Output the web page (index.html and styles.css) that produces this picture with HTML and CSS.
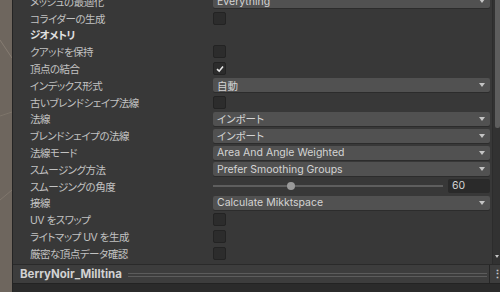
FILE: index.html
```html
<!DOCTYPE html>
<html lang="ja">
<head>
    <meta charset="UTF-8">
    <meta name="viewport" content="width=device-width, initial-scale=1.0">
    <title>Model Import Settings</title>
    <link rel="stylesheet" href="styles.css">
</head>
<body>
    <div class="scene">
        <svg width="12" height="292" viewBox="0 0 12 292">
            <line x1="0" y1="40" x2="12" y2="58" stroke="#867c72" stroke-width="1"/>
            <line x1="0" y1="116" x2="12" y2="112" stroke="#7d746a" stroke-width="1"/>
            <line x1="0" y1="200" x2="12" y2="190" stroke="#80776d" stroke-width="1"/>
        </svg>
    </div>
    <div class="inspector">
        <div class="content">
            <div class="rows">
                <div class="row">
                    <span class="label">メッシュの最適化</span>
                    <div class="dropdown">Everything<i class="arrow"></i></div>
                </div>
                <div class="row">
                    <span class="label">コライダーの生成</span>
                    <span class="check"></span>
                </div>
                <div class="row">
                    <span class="label header">ジオメトリ</span>
                </div>
                <div class="row">
                    <span class="label">クアッドを保持</span>
                    <span class="check"></span>
                </div>
                <div class="row">
                    <span class="label">頂点の結合</span>
                    <span class="check on">
                        <svg width="10" height="10" viewBox="0 0 10 10"><polyline points="2,5.2 4.2,7.2 8,2.6" fill="none" stroke="#e8e8e8" stroke-width="1.6"/></svg>
                    </span>
                </div>
                <div class="row">
                    <span class="label">インデックス形式</span>
                    <div class="dropdown">自動<i class="arrow"></i></div>
                </div>
                <div class="row">
                    <span class="label">古いブレンドシェイプ法線</span>
                    <span class="check"></span>
                </div>
                <div class="row">
                    <span class="label">法線</span>
                    <div class="dropdown">インポート<i class="arrow"></i></div>
                </div>
                <div class="row">
                    <span class="label">ブレンドシェイプの法線</span>
                    <div class="dropdown">インポート<i class="arrow"></i></div>
                </div>
                <div class="row">
                    <span class="label">法線モード</span>
                    <div class="dropdown">Area And Angle Weighted<i class="arrow"></i></div>
                </div>
                <div class="row">
                    <span class="label">スムージング方法</span>
                    <div class="dropdown">Prefer Smoothing Groups<i class="arrow"></i></div>
                </div>
                <div class="row">
                    <span class="label">スムージングの角度</span>
                    <div class="slider">
                        <div class="track"><span class="knob" style="left: 34%"></span></div>
                        <div class="number">60</div>
                    </div>
                </div>
                <div class="row">
                    <span class="label">接線</span>
                    <div class="dropdown">Calculate Mikktspace<i class="arrow"></i></div>
                </div>
                <div class="row">
                    <span class="label">UV をスワップ</span>
                    <span class="check"></span>
                </div>
                <div class="row">
                    <span class="label">ライトマップ UV を生成</span>
                    <span class="check"></span>
                </div>
                <div class="row">
                    <span class="label">厳密な頂点データ確認</span>
                    <span class="check"></span>
                </div>
            </div>
            <div class="scrollbar">
                <div class="thumb"></div>
                <i class="down"></i>
            </div>
        </div>
        <div class="footer">
            <span class="asset-name">BerryNoir_Milltina</span>
            <span class="grip"></span>
            <span class="menu">⋮</span>
        </div>
        <div class="bottom"></div>
    </div>
</body>
</html>
```

FILE: styles.css
```css
body {
    margin: 0;
    width: 500px;
    height: 292px;
    overflow: hidden;
    display: flex;
    background-color: #383838;
    font-family: Inter, "Noto Sans CJK JP", sans-serif;
    font-feature-settings: "palt";
    color: #c2c2c2;
}
.scene {
    width: 12px;
    flex: none;
    background-color: #6e665e;
    border-right: 1px solid #242424;
}
.scene svg {
    display: block;
}
.inspector {
    flex: 1;
    display: flex;
    flex-direction: column;
    min-width: 0;
}
.content {
    flex: 1;
    display: flex;
    overflow: hidden;
}
.rows {
    flex: 1;
    margin-top: -7px;
    padding-left: 17px;
    padding-right: 2px;
}
.row {
    height: 16.8px;
    display: flex;
    align-items: center;
}
.label {
    width: 183px;
    flex: none;
    font-size: 10.5px;
    letter-spacing: -0.5px;
    white-space: nowrap;
    overflow: hidden;
}
.label.header {
    font-weight: bold;
    color: #e0e0e0;
}
.dropdown {
    flex: 1;
    height: 14px;
    box-sizing: border-box;
    background-color: #515151;
    border-radius: 2px;
    box-shadow: 0 1px 0 #2c2c2c;
    display: flex;
    align-items: center;
    padding-left: 4px;
    padding-right: 5px;
    font-size: 10.5px;
    color: #d4d4d4;
    white-space: nowrap;
}
.arrow {
    margin-left: auto;
    width: 0;
    height: 0;
    border-left: 3.5px solid transparent;
    border-right: 3.5px solid transparent;
    border-top: 4px solid #c4c4c4;
}
.check {
    width: 11px;
    height: 11px;
    background-color: #2c2c2c;
    border: 1px solid #232323;
    border-radius: 2px;
    display: flex;
    align-items: center;
    justify-content: center;
}
.check svg {
    display: block;
}
.slider {
    flex: 1;
    display: flex;
    align-items: center;
}
.track {
    flex: 1;
    height: 2px;
    background-color: #5e5e5e;
    position: relative;
    margin-right: 5px;
}
.knob {
    position: absolute;
    top: -3px;
    width: 8px;
    height: 8px;
    margin-left: -4px;
    border-radius: 50%;
    background-color: #999999;
}
.number {
    width: 42px;
    height: 14px;
    box-sizing: border-box;
    background-color: #2a2a2a;
    border-radius: 2px;
    padding-left: 4px;
    font-size: 10.5px;
    line-height: 14px;
    color: #d4d4d4;
}
.scrollbar {
    width: 7px;
    flex: none;
    background-color: #323232;
    border-left: 1px solid #2c2c2c;
    position: relative;
}
.thumb {
    margin-left: 2px;
    width: 5px;
    height: 128px;
    background-color: #5d5d5d;
    border-radius: 0 0 2px 2px;
}
.down {
    position: absolute;
    left: 2px;
    bottom: 6px;
    width: 0;
    height: 0;
    border-left: 2.5px solid transparent;
    border-right: 2.5px solid transparent;
    border-top: 3px solid #c4c4c4;
}
.footer {
    height: 18px;
    flex: none;
    display: flex;
    align-items: center;
    background-color: #3d3d3d;
    border-top: 1px solid #2a2a2a;
    border-bottom: 1px solid #232323;
    padding-left: 7px;
}
.asset-name {
    font-size: 11.5px;
    font-weight: bold;
    color: #d2d2d2;
}
.grip {
    flex: 1;
    height: 2px;
    margin-left: 6px;
    border-top: 1px solid #5c5c5c;
    border-bottom: 1px solid #5c5c5c;
    margin-top: 1px;
}
.menu {
    width: 8px;
    height: 100%;
    margin-left: 2px;
    border-left: 1px solid #262626;
    font-size: 11px;
    font-weight: bold;
    line-height: 18px;
    color: #c8c8c8;
    padding-left: 2px;
}
.bottom {
    height: 8px;
    flex: none;
    background-color: #2b2b2b;
}
```
